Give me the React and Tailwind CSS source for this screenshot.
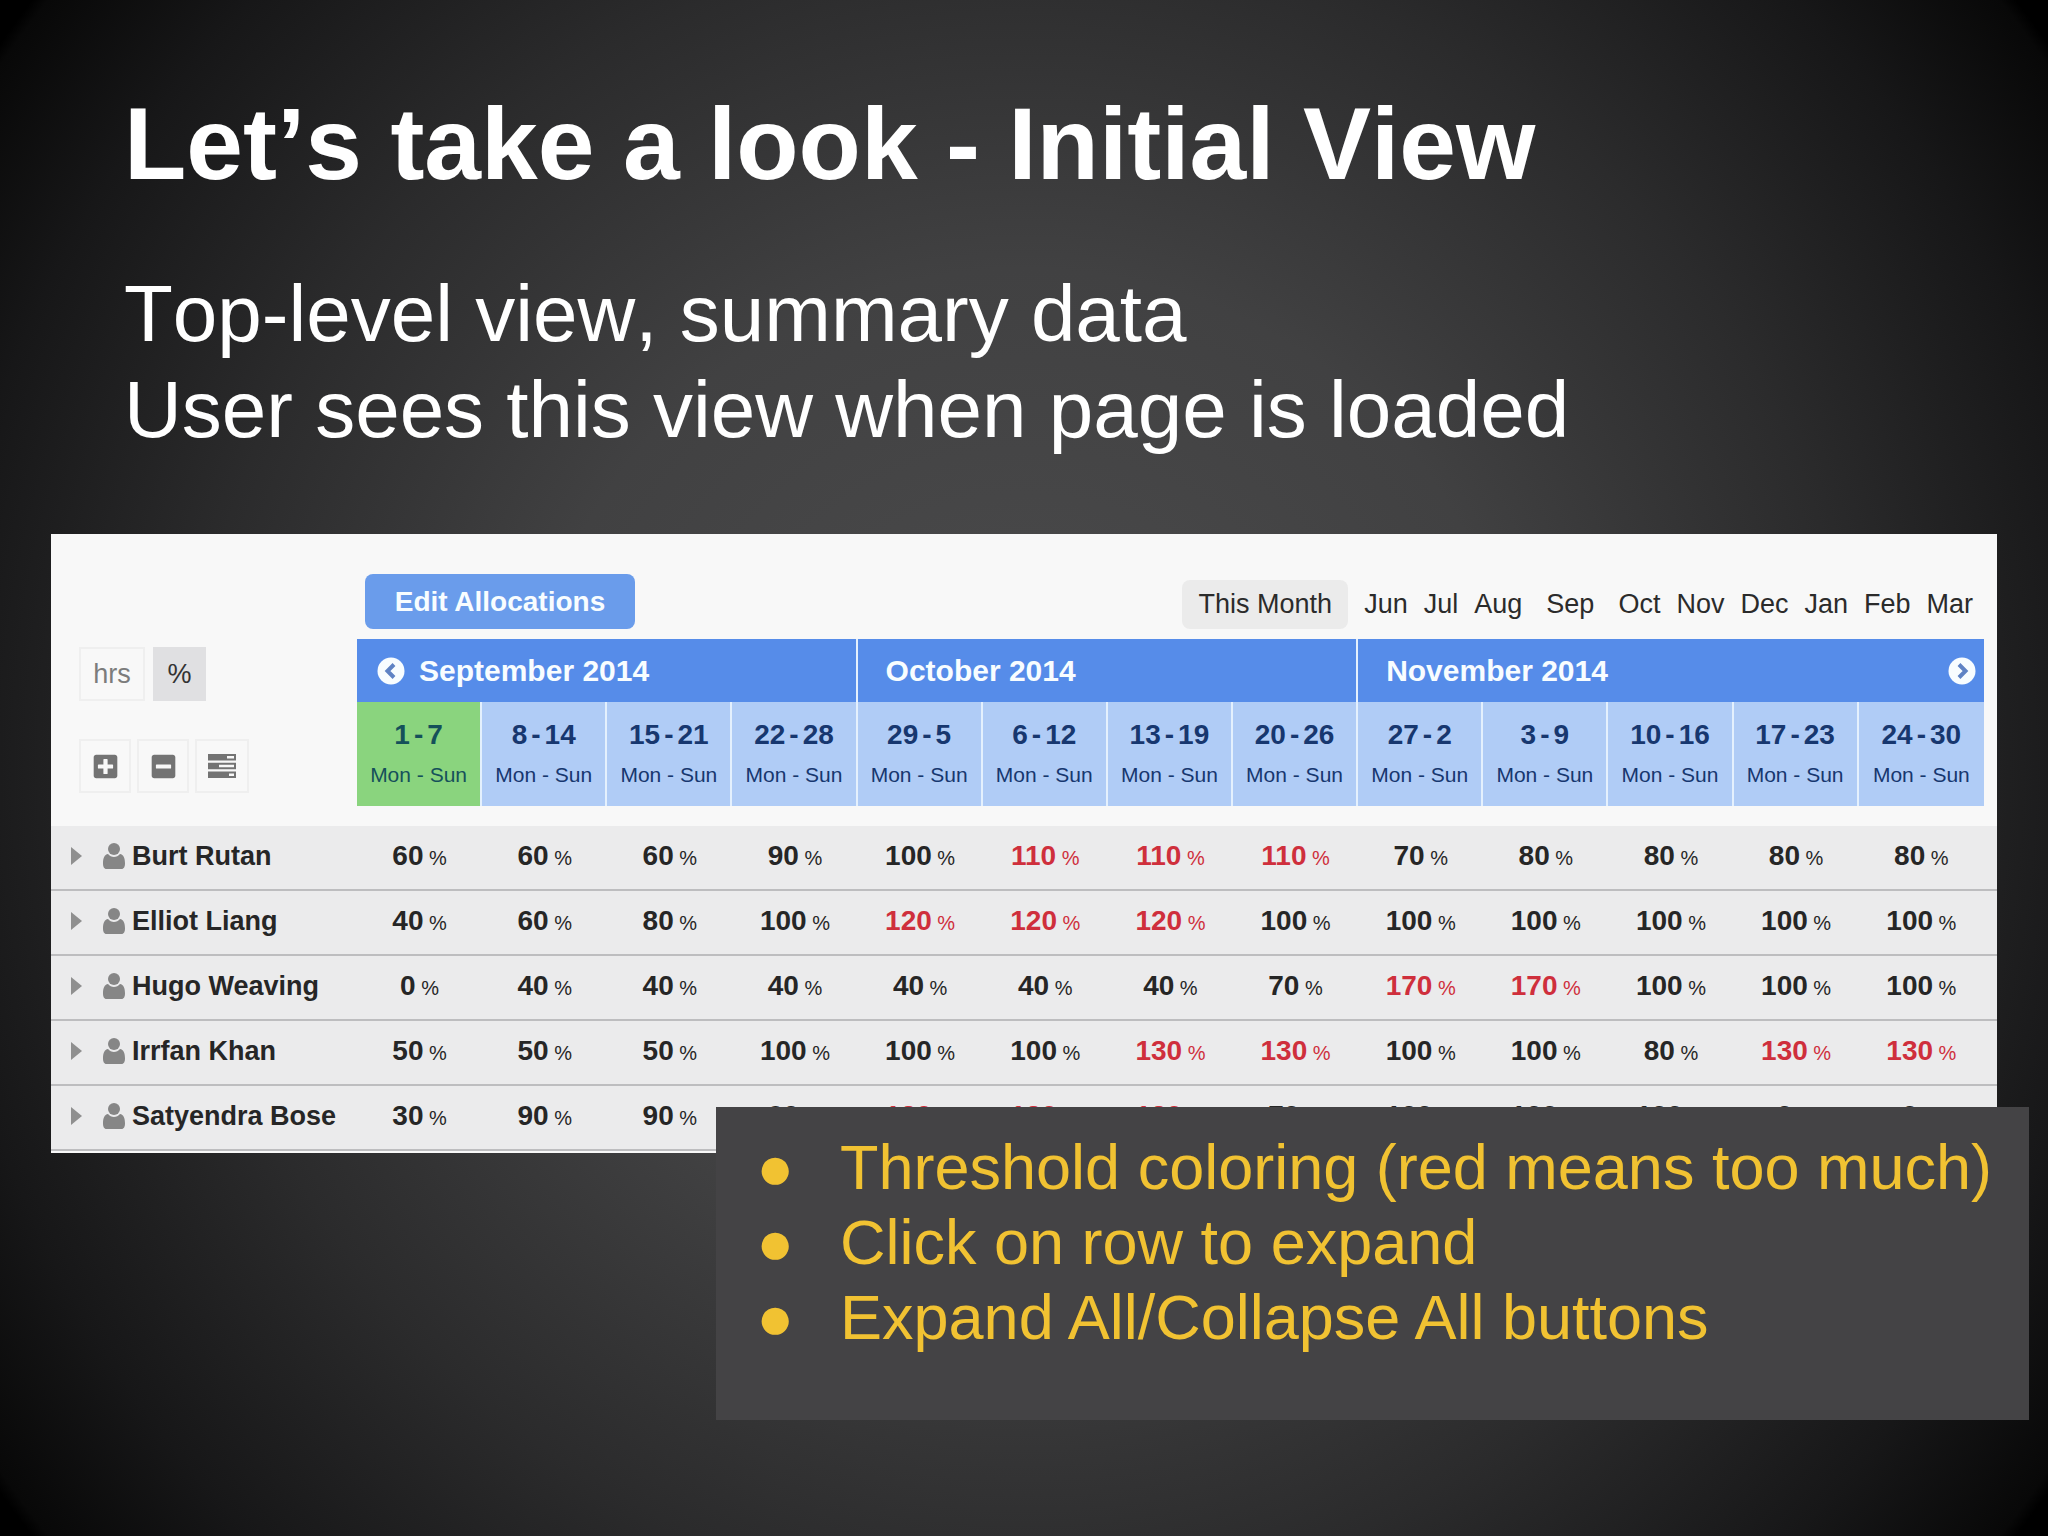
import { useState } from 'react';
import { FaMinusSquare, FaPlusSquare } from 'react-icons/fa';

const MONTHS = ['Jun', 'Jul', 'Aug', 'Sep', 'Oct', 'Nov', 'Dec', 'Jan', 'Feb', 'Mar'];

const WEEKS = [
  ['1', '7'], ['8', '14'], ['15', '21'], ['22', '28'],
  ['29', '5'], ['6', '12'], ['13', '19'], ['20', '26'],
  ['27', '2'], ['3', '9'], ['10', '16'], ['17', '23'], ['24', '30'],
];

const PEOPLE = [
  { name: 'Burt Rutan', load: [60, 60, 60, 90, 100, 110, 110, 110, 70, 80, 80, 80, 80] },
  { name: 'Elliot Liang', load: [40, 60, 80, 100, 120, 120, 120, 100, 100, 100, 100, 100, 100] },
  { name: 'Hugo Weaving', load: [0, 40, 40, 40, 40, 40, 40, 70, 170, 170, 100, 100, 100] },
  { name: 'Irrfan Khan', load: [50, 50, 50, 100, 100, 100, 130, 130, 100, 100, 80, 130, 130] },
  { name: 'Satyendra Bose', load: [30, 90, 90, 90, 120, 120, 120, 70, 100, 100, 100, 0, 0] },
];

const NOTES = [
  'Threshold coloring (red means too much)',
  'Click on row to expand',
  'Expand All/Collapse All buttons',
];

const THRESHOLD = 100; // anything above this is over-allocated

function CircleChevron({ direction }) {
  return (
    <svg width="28" height="28" viewBox="0 0 28 28" aria-hidden="true">
      <circle cx="14" cy="14" r="13.5" fill="#f8fdff" />
      <path
        d={direction === 'left' ? 'M17 7.5 L10.5 14 L17 20.5' : 'M11 7.5 L17.5 14 L11 20.5'}
        fill="none"
        stroke="#5f83c4"
        strokeWidth="4"
      />
    </svg>
  );
}

function TasksIcon() {
  return (
    <svg width="28" height="24" viewBox="0 0 28 24" fill="#737373" aria-hidden="true">
      <path fillRule="evenodd" d="M0 0h28v6.5H0zM19 2v2.5h7V2z" />
      <path fillRule="evenodd" d="M0 8.8h28v6.5H0zM11 10.8v2.5h15v-2.5z" />
      <path fillRule="evenodd" d="M0 17.5h28V24H0zM21 19.5V22h5v-2.5z" />
    </svg>
  );
}

function PersonIcon() {
  return (
    <svg width="22" height="26" viewBox="0 0 22 26" fill="#868686" aria-hidden="true">
      <circle cx="11" cy="6" r="6" />
      <path d="M5 11c1.6 2 3.7 3 6 3s4.4-1 6-3c3.5.6 5 4 5 9.5 0 3-1 5.500-3.500 5.500h-15C1 26 0 23.500 0 20.500 0 15 1.500 11.600 5 11z" />
    </svg>
  );
}

function Controls({ unit, onUnit }) {
  const base = 'flex h-[54px] items-center justify-center border-2';
  return (
    <div className="flex flex-col gap-[38px] pt-2 pl-7">
      <div className="flex gap-2 text-[27px]">
        <button
          type="button"
          onClick={() => onUnit('hrs')}
          className={`${base} w-[66px] ${unit === 'hrs' ? 'border-[#e0e0e2] bg-[#e0e0e2] text-[#333]' : 'border-[#efefef] text-[#7c7c7c]'}`}
        >
          hrs
        </button>
        <button
          type="button"
          onClick={() => onUnit('%')}
          className={`${base} w-[53px] ${unit === '%' ? 'border-[#e0e0e2] bg-[#e0e0e2] text-[#333]' : 'border-[#efefef] text-[#7c7c7c]'}`}
        >
          %
        </button>
      </div>
      <div className="flex gap-[6px] text-[#737373]">
        <button type="button" aria-label="Expand all" className={`${base} w-[52px] border-[#efefef]`}>
          <FaPlusSquare size={27} />
        </button>
        <button type="button" aria-label="Collapse all" className={`${base} w-[52px] border-[#efefef]`}>
          <FaMinusSquare size={27} />
        </button>
        <button type="button" aria-label="Show tasks" className={`${base} w-[54px] border-[#efefef]`}>
          <TasksIcon />
        </button>
      </div>
    </div>
  );
}

function Toolbar() {
  return (
    <div className="flex items-end justify-between pt-10 pr-6 pb-[10px] pl-[314px]">
      <button type="button" className="h-[55px] w-[270px] rounded-lg bg-[#6a9ceb] text-[28px] font-bold text-[#f8fdff]">
        Edit Allocations
      </button>
      <nav className="flex items-center gap-4 text-[27px] text-[#2b2b2b]">
        <button type="button" className="h-[49px] w-[166px] rounded-lg bg-[#ebebeb]">
          This Month
        </button>
        {MONTHS.map((m) => (
          <a key={m} href={`#${m}`} className={m === 'Sep' ? 'px-2' : ''}>{m}</a>
        ))}
      </nav>
    </div>
  );
}

function AllocationTable() {
  const [unit, setUnit] = useState('%');
  const monthCell = 'h-[63px] border-[#e4f0fd] bg-[#568ce9] p-0 text-left text-[30px] font-bold text-[#f8fdff]';

  return (
    <table className="w-full table-fixed border-separate border-spacing-0">
      <colgroup>
        <col className="w-[306px]" />
        {WEEKS.map(([from]) => <col key={from} />)}
        <col className="w-[13px]" />
      </colgroup>
      <thead>
        <tr>
          <td rowSpan={2} className="p-0 align-top">
            <Controls unit={unit} onUnit={setUnit} />
          </td>
          <th colSpan={4} className={`${monthCell} border-r-2`}>
            <div className="flex items-center gap-[14px] pl-5">
              <button type="button" aria-label="Previous month"><CircleChevron direction="left" /></button>
              September 2014
            </div>
          </th>
          <th colSpan={4} className={`${monthCell} border-r-2`}>
            <div className="pl-7">October 2014</div>
          </th>
          <th colSpan={5} className={monthCell}>
            <div className="flex items-center justify-between pr-2 pl-7">
              November 2014
              <button type="button" aria-label="Next month"><CircleChevron direction="right" /></button>
            </div>
          </th>
          <td />
        </tr>
        <tr>
          {WEEKS.map(([from, to], i) => (
            <th
              key={from}
              className={`border-[#e4f0fd] px-0 pt-[14px] pb-[10px] font-normal ${i < WEEKS.length - 1 ? 'border-r-2' : ''} ${i === 0 ? 'bg-[#8ad47e] text-[#15505a]' : 'bg-[#b0ccf6] text-[#17376f]'}`}
            >
              <div className="text-[28px] leading-[38px] font-bold">
                {from}<span className="px-1">-</span>{to}
              </div>
              <div className="text-[21px] leading-[42px]">Mon - Sun</div>
            </th>
          ))}
          <td />
        </tr>
        <tr className="h-5"><td colSpan={15} className="p-0" /></tr>
      </thead>
      <tbody className="bg-[#ebebec]">
        {PEOPLE.map(({ name, load }) => (
          <tr key={name} className="h-[65px] cursor-pointer">
            <th className="border-b-2 border-[#bdbdbf] p-0 pb-[3px] text-left text-[27px] font-bold text-[#262626]">
              <div className="flex items-center pl-5">
                <svg width="11" height="18" viewBox="0 0 11 18" className="mr-[21px]" aria-hidden="true">
                  <path d="M0 0 L11 9 L0 18z" fill="#8f8f8f" />
                </svg>
                <PersonIcon />
                <span className="pl-[7px]">{name}</span>
              </div>
            </th>
            {load.map((value, i) => (
              <td
                key={WEEKS[i][0]}
                className={`border-b-2 border-[#bdbdbf] p-0 pb-[3px] text-center text-[28px] font-bold ${value > THRESHOLD ? 'text-[#cf2f3c]' : 'text-[#262626]'}`}
              >
                {value}<span className="text-[20px] font-normal"> %</span>
              </td>
            ))}
            <td className="border-b-2 border-[#bdbdbf] p-0" />
          </tr>
        ))}
      </tbody>
    </table>
  );
}

export default function App() {
  return (
    <main className="min-h-screen bg-[radial-gradient(circle_farthest-corner_at_center,#4c4c4d_0%,#414142_39%,#2b2b2c_65%,#171718_85%,#080808_97%,#000_98%)] pt-[84px] font-['Liberation_Sans',Arial,sans-serif]">
      <header className="px-[124px] text-white [font-kerning:none]">
        <h1 className="text-[102px] leading-[120px] font-bold">Let’s take a look - Initial View</h1>
        <p className="mt-[62px] text-[80px] leading-[96px]">
          Top-level view, summary data
          <br />
          User sees this view when page is loaded
        </p>
      </header>

      <section className="mx-[51px] mt-[76px] bg-[#f8f8f8] pb-[2px]">
        <Toolbar />
        <AllocationTable />
      </section>

      {/* Notes card overlaps the bottom of the table */}
      <aside className="relative mt-[-46px] mr-[19px] ml-[716px] bg-[#444345] pt-[23px] pb-[65px] pl-10">
        <ul className="text-[63px] leading-[75px] text-[#f1c232]">
          {NOTES.map((note) => (
            <li key={note} className="flex">
              <span className="w-[84px] shrink-0" aria-hidden="true">●</span>
              {note}
            </li>
          ))}
        </ul>
      </aside>
    </main>
  );
}
